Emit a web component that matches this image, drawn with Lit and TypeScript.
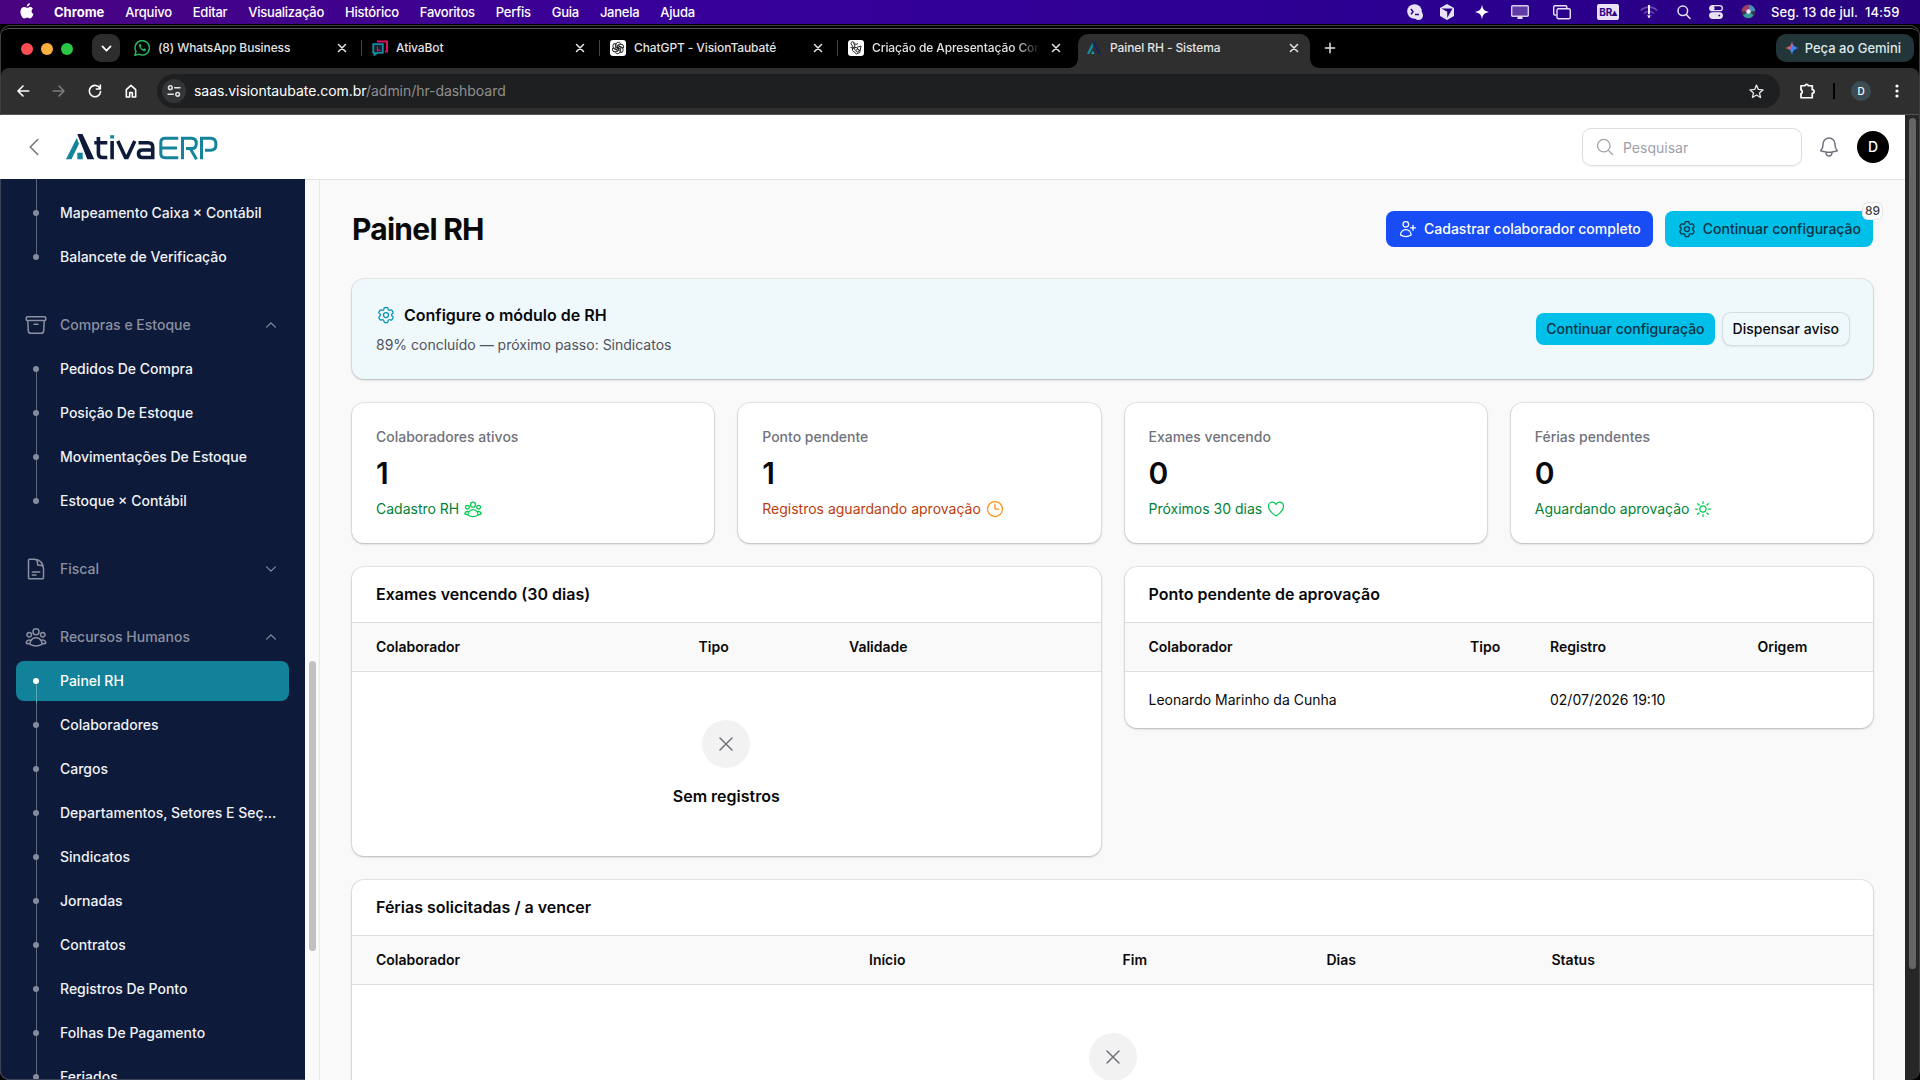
import { LitElement, html, css, svg, nothing } from 'lit';
import { customElement, property } from 'lit/decorators.js';
import { classMap } from 'lit/directives/class-map.js';

const ICONS: Record<string, unknown> = {
  gear: svg`<path d="M9.594 3.94c.09-.542.56-.94 1.11-.94h2.593c.55 0 1.02.398 1.11.94l.213 1.281c.063.374.313.686.645.87.074.04.147.083.22.127.325.196.72.257 1.075.124l1.217-.456a1.125 1.125 0 0 1 1.37.49l1.296 2.247a1.125 1.125 0 0 1-.26 1.431l-1.003.827c-.293.241-.438.613-.43.992a7.723 7.723 0 0 1 0 .255c-.008.378.137.75.43.991l1.004.827c.424.35.534.955.26 1.43l-1.298 2.247a1.125 1.125 0 0 1-1.369.491l-1.217-.456c-.355-.133-.75-.072-1.076.124a6.47 6.47 0 0 1-.22.128c-.331.183-.581.495-.644.869l-.213 1.281c-.09.543-.56.94-1.11.94h-2.594c-.55 0-1.019-.398-1.11-.94l-.213-1.281c-.062-.374-.312-.686-.644-.87a6.52 6.52 0 0 1-.22-.127c-.325-.196-.72-.257-1.076-.124l-1.217.456a1.125 1.125 0 0 1-1.369-.49l-1.297-2.247a1.125 1.125 0 0 1 .26-1.431l1.004-.827c.292-.24.437-.613.43-.991a6.932 6.932 0 0 1 0-.255c.007-.38-.138-.751-.43-.992l-1.004-.827a1.125 1.125 0 0 1-.26-1.43l1.297-2.247a1.125 1.125 0 0 1 1.37-.491l1.216.456c.356.133.751.072 1.076-.124.072-.044.146-.086.22-.128.332-.183.582-.495.644-.869l.214-1.28Z"/><path d="M15 12a3 3 0 1 1-6 0 3 3 0 0 1 6 0Z"/>`,
  userPlus: svg`<path d="M18 7.5v3m0 0v3m0-3h3m-3 0h-3m-2.25-4.125a3.375 3.375 0 1 1-6.75 0 3.375 3.375 0 0 1 6.75 0ZM3 19.235v-.11a6.375 6.375 0 0 1 12.75 0v.109A12.318 12.318 0 0 1 9.374 21c-2.331 0-4.512-.645-6.374-1.766Z"/>`,
  users: svg`<path d="M18 18.72a9.094 9.094 0 0 0 3.741-.479 3 3 0 0 0-4.682-2.72m.94 3.198.001.031c0 .225-.012.447-.037.666A11.944 11.944 0 0 1 12 21c-2.17 0-4.207-.576-5.963-1.584A6.062 6.062 0 0 1 6 18.719m12 0a5.971 5.971 0 0 0-.941-3.197m0 0A5.995 5.995 0 0 0 12 12.75a5.995 5.995 0 0 0-5.058 2.772m0 0a3 3 0 0 0-4.681 2.72 8.986 8.986 0 0 0 3.74.477m.94-3.197a5.971 5.971 0 0 0-.94 3.197M15 6.75a3 3 0 1 1-6 0 3 3 0 0 1 6 0Zm6 3a2.25 2.25 0 1 1-4.5 0 2.25 2.25 0 0 1 4.5 0Zm-13.5 0a2.25 2.25 0 1 1-4.5 0 2.25 2.25 0 0 1 4.5 0Z"/>`,
  clock: svg`<path d="M12 6v6h4.5m4.5 0a9 9 0 1 1-18 0 9 9 0 0 1 18 0Z"/>`,
  heart: svg`<path d="M21 8.25c0-2.485-2.099-4.5-4.688-4.5-1.935 0-3.597 1.126-4.312 2.733-.715-1.607-2.377-2.733-4.313-2.733C5.1 3.75 3 5.765 3 8.25c0 7.22 9 12 9 12s9-4.78 9-12Z"/>`,
  sun: svg`<path d="M12 3v2.25m6.364.386-1.591 1.591M21 12h-2.25m-.386 6.364-1.591-1.591M12 18.75V21m-4.773-4.227-1.591 1.591M5.25 12H3m4.227-4.773L5.636 5.636M15.75 12a3.75 3.75 0 1 1-7.5 0 3.75 3.75 0 0 1 7.5 0Z"/>`,
  archive: svg`<path d="m20.25 7.5-.625 10.632a2.25 2.25 0 0 1-2.247 2.118H6.622a2.25 2.25 0 0 1-2.247-2.118L3.75 7.5M10 11.25h4M3.375 7.5h17.25c.621 0 1.125-.504 1.125-1.125v-1.5c0-.621-.504-1.125-1.125-1.125H3.375c-.621 0-1.125.504-1.125 1.125v1.5c0 .621.504 1.125 1.125 1.125Z"/>`,
  document: svg`<path d="M19.5 14.25v-2.625a3.375 3.375 0 0 0-3.375-3.375h-1.5A1.125 1.125 0 0 1 13.5 7.125v-1.5a3.375 3.375 0 0 0-3.375-3.375H8.25m0 12.75h7.5m-7.5 3H12M10.5 2.25H5.625c-.621 0-1.125.504-1.125 1.125v17.25c0 .621.504 1.125 1.125 1.125h12.75c.621 0 1.125-.504 1.125-1.125V11.25a9 9 0 0 0-9-9Z"/>`,
  up: svg`<path d="m4.5 15.75 7.5-7.5 7.5 7.5"/>`,
  down: svg`<path d="m19.5 8.25-7.5 7.5-7.5-7.5"/>`,
  left: svg`<path d="M15.75 19.5 8.25 12l7.5-7.5"/>`,
  search: svg`<path d="m21 21-5.197-5.197m0 0A7.5 7.5 0 1 0 5.196 5.196a7.5 7.5 0 0 0 10.607 10.607Z"/>`,
  bell: svg`<path d="M14.857 17.082a23.848 23.848 0 0 0 5.454-1.31A8.967 8.967 0 0 1 18 9.75V9A6 6 0 0 0 6 9v.75a8.967 8.967 0 0 1-2.312 6.022c1.733.64 3.56 1.085 5.455 1.31m5.714 0a24.255 24.255 0 0 1-5.714 0m5.714 0a3 3 0 1 1-5.714 0"/>`,
  close: svg`<path d="M6 18 18 6M6 6l12 12"/>`,
  back: svg`<path d="M20.5 12H4.5M12 4.5 4.5 12l7.5 7.5"/>`,
  forward: svg`<path d="M3.5 12h16M12 4.5l7.500 7.500-7.500 7.500"/>`,
  reload: svg`<path d="M19.5 8.2A8.5 8.5 0 1 0 20.4 13M20 3v6h-6"/>`,
  home: svg`<path d="M5 10v11h5v-6.5h4V21h5V10l-7-6.5Z"/>`,
  tune: svg`<path d="M13 7h8M3 17h8"/><circle cx="6.500" cy="7" r="2.800"/><circle cx="17.500" cy="17" r="2.800"/>`,
  star: svg`<path d="m12 3 2.6 6.1 6.6.6-5 4.3 1.5 6.5-5.7-3.5-5.7 3.5 1.5-6.5-5-4.3 6.6-.6Z"/>`,
  puzzle: svg`<path d="M4 5h5.2a2.4 2.4 0 0 1 4.6 0H19v5.300a2.4 2.4 0 0 1 0 4.800V21H4v-5.500a2.700 2.700 0 0 0 0-5Z"/>`,
  plus: svg`<path d="M12 4v16M4 12h16"/>`,
};

const icon = (name: string, size = 20, stroke = 1.5) => html`
  <svg class="icon" viewBox="0 0 24 24" width=${size} height=${size} fill="none" stroke="currentColor"
    stroke-width=${stroke} stroke-linecap="round" stroke-linejoin="round">${ICONS[name]}</svg>`;

const base = css`
  * { box-sizing: border-box; }
  svg { display: block; flex: none; }
`;

@customElement('mac-menubar')
export class MacMenubar extends LitElement {
  static styles = [base, css`
    :host {
      box-sizing: border-box;
      display: flex;
      justify-content: space-between;
      height: 24px;
      padding: 0 19px 1px 20px;
      background: linear-gradient(90deg, #490380, #37009a 35%, #2b0091 75%, #28007c);
      color: #fff;
      font: 500 13px/22px Inter, sans-serif;
    }
    .menus, .status { display: flex; align-items: center; }
    .apple { margin-right: 20px; }
    .menu { margin-right: 21px; white-space: nowrap; letter-spacing: -.25px; }
    .app { font-weight: 700; letter-spacing: 0; }
    .clock { width: 130px; white-space: pre; letter-spacing: .08px; }
    .br {
      width: 22px;
      height: 16px;
      border-radius: 2px;
      background: #e9e2f5;
      color: #2b0088;
      font: 700 10px/16px Inter, sans-serif;
      letter-spacing: -.3px;
      text-align: center;
    }
    .s1 { margin-right: 17px; }
    .s2 { margin-right: 21px; }
    .s3 { margin-right: 22px; }
    .s4 { margin-right: 24px; }
    .s5 { margin-right: 26px; }
    .s6 { margin-right: 21px; }
    .s7 { margin-right: 19px; }
    .s8 { margin-right: 18px; }
    .s9 { margin-right: 18px; }
    .s10 { margin-right: 15px; }
  `];

  menus = ['Arquivo', 'Editar', 'Visualização', 'Histórico', 'Favoritos', 'Perfis', 'Guia', 'Janela', 'Ajuda'];

  render() {
    return html`
      <div class="menus">
        <svg class="apple" width="14" height="17" viewBox="0 0 14 17" fill="#fff">
          <path d="M9.900 0c.1 1.900-1.400 3.500-3.100 3.500C6.600 1.800 8.200.2 9.900 0Z"/>
          <path d="M12.900 5.700c-1.900 1.200-1.700 4.200.6 5.200-.6 1.800-2 4.500-3.500 4.600-1.100 0-1.500-.7-2.800-.7s-1.700.7-2.800.7C2.500 15.400.4 12 .4 8.700c0-3 1.900-4.700 3.900-4.700 1.200 0 2 .8 3 .8s1.700-.8 3.200-.8c.9 0 1.800.5 2.400 1.700Z"/>
        </svg>
        <span class="menu app">Chrome</span>
        ${this.menus.map(m => html`<span class="menu">${m}</span>`)}
      </div>
      <div class="status">
        <svg class="s1" width="16" height="16" viewBox="0 0 16 16"><circle cx="7.500" cy="7.500" r="7.300" fill="#e9e2f5"/><circle cx="11.500" cy="11.500" r="4.500" fill="#e9e2f5"/><path d="m4 5 2 2.700-2 2.700M8 10.400h4" fill="none" stroke="#2b0088" stroke-width="1.500"/></svg>
        <svg class="s2" width="14" height="16" viewBox="0 0 14 16"><path d="m7 0 7 4v8l-7 4-7-4V4Z" fill="#e9e2f5"/><path d="M1.500 4.600h11L7.200 14V7.700Z" fill="#2b0088"/></svg>
        <svg class="s3" width="14" height="16" viewBox="0 0 14 16"><path d="M7 .5c.8 5 2.200 6.500 7 7.500-4.800 1-6.200 2.500-7 7.500-.8-5-2.200-6.500-7-7.500 4.800-1 6.200-2.500 7-7.500Z" fill="#fff"/></svg>
        <svg class="s4" width="18" height="16" viewBox="0 0 18 16"><rect x=".7" y="1.700" width="16.600" height="10.600" rx="1" fill="#5f3ba6" stroke="#d9cdee" stroke-width="1.400"/><path d="M7 12.500h4l.8 2.500H6.200Z" fill="#e9e2f5"/></svg>
        <svg class="s5" width="18" height="16" viewBox="0 0 18 16" fill="none" stroke="#e9e2f5" stroke-width="1.400"><path d="M3.500 11H2a1.300 1.300 0 0 1-1.300-1.300V3A1.300 1.300 0 0 1 2 1.700h10.500A1.300 1.300 0 0 1 13.800 3v1"/><rect x="4" y="4.800" width="13.300" height="10" rx="1.500"/></svg>
        <span class="br s6">BR▴</span>
        <svg class="s7" width="18" height="16" viewBox="0 0 18 16" fill="none" stroke="#6c49ae" stroke-width="1.700"><path d="M1 6.500C5 2 13 2 17 6.500M4 9.500c3-3 7-3 10 0M6.800 12c1.500-1.200 3-1.200 4.400 0"/><path d="M9 1v9M9 11.500v2.300" stroke="#fff" stroke-width="1.800"/></svg>
        <svg class="s8" width="14" height="16" viewBox="0 0 14 16" fill="none" stroke="#e9e2f5" stroke-width="1.500" stroke-linecap="round"><circle cx="5.800" cy="6.800" r="4.800"/><path d="m9.300 10.500 3.700 4"/></svg>
        <svg class="s9" width="14" height="16" viewBox="0 0 14 16" fill="none" stroke="#e9e2f5" stroke-width="1.300"><rect x=".7" y="1.700" width="12.600" height="5" rx="2.500"/><rect x=".7" y="8.800" width="12.600" height="5.500" rx="2.700" fill="#e9e2f5"/><circle cx="3.300" cy="4.200" r="1.700" fill="#e9e2f5"/><circle cx="10.300" cy="11.500" r="1.600" fill="#2b0088"/></svg>
        <svg class="s10" width="15" height="15" viewBox="0 0 15 15"><circle cx="7.500" cy="7.500" r="7" fill="#3b3454"/><path d="M7.500.7a6.800 6.800 0 0 1 6.700 6L8 8Z" fill="#4a8fc0"/><path d="M.8 7a7 7 0 0 1 6.700-6.300L8 8Z" fill="#a83c67"/><path d="M2 11.500a6.500 6.500 0 0 0 10.500 0L8 7Z" fill="#3a9b9e"/><circle cx="7.500" cy="7.500" r="2.200" fill="#f0e8fa"/></svg>
        <span class="clock">Seg. 13 de jul.  14:59</span>
      </div>`;
  }
}

@customElement('browser-chrome')
export class BrowserChrome extends LitElement {
  static styles = [base, css`
    :host {
      box-sizing: border-box;
      display: block;
      height: 91px;
      padding-top: 1px;
      background: #000;
      color: #e3e3e3;
      font: 500 12px/16px Inter, sans-serif;
    }
    .frame {
      height: 90px;
      border: 1px solid #3d3d3d;
      border-bottom: 0;
      border-radius: 10px 10px 0 0;
      padding-top: 2px;
    }
    .strip {
      display: flex;
      align-items: flex-end;
      height: 40px;
      border-top: 1px solid #555;
      border-radius: 9px 9px 0 0;
      margin: 0 -1px;
      padding-left: 21px;
    }
    .lights {
      display: flex;
      gap: 8px;
      align-self: center;
      margin-right: 19px;
    }
    .light { width: 12px; height: 12px; border-radius: 50%; background: #ff4d55; }
    .light.min { background: #ffb03f; }
    .light.max { background: #2ac845; }
    .tab-menu {
      display: grid;
      place-items: center;
      width: 28px;
      height: 28px;
      margin-bottom: 6px;
      border-radius: 9px;
      background: #2d2d2d;
      color: #fff;
    }
    .tab {
      position: relative;
      display: flex;
      align-items: center;
      width: 238px;
      height: 34px;
      padding: 0 9px 6px 14px;
      flex: none;
    }
    .tab.line::after {
      content: '';
      position: absolute;
      right: -4px;
      top: 6px;
      width: 1px;
      height: 16px;
      background: #444;
    }
    .tab.active {
      background: #2f2f2f;
      border-radius: 10px 10px 0 0;
      width: 232px;
      margin-left: 6px;
      padding-left: 8px;
    }
    .tab.active::before, .tab.active::after {
      content: '';
      position: absolute;
      bottom: 0;
      width: 9px;
      height: 9px;
    }
    .tab.active::before {
      left: -9px;
      background: radial-gradient(circle at 0 0, transparent 8.5px, #2f2f2f 9px);
    }
    .tab.active::after {
      right: -9px;
      background: radial-gradient(circle at 100% 0, transparent 8.5px, #2f2f2f 9px);
    }
    .title {
      flex: 1;
      margin: 0 9px 0 8px;
      overflow: hidden;
      white-space: nowrap;
      letter-spacing: -.1px;
    }
    .fade { mask-image: linear-gradient(90deg, #000 86%, transparent); }
    .new { margin: 0 0 13px 13px; }
    .gemini {
      display: flex;
      align-items: center;
      gap: 6px;
      height: 28px;
      padding: 0 13px 0 9px;
      margin: 0 6px 6px auto;
      border-radius: 10px;
      background: #22363a;
      color: #dfe8e9;
      font-size: 13px;
    }
    .toolbar {
      display: flex;
      align-items: center;
      height: 47px;
      padding: 0 20px 0 14px;
      background: #2f2f2f;
      border-bottom: 1px solid #555;
      border-radius: 8px 8px 0 0;
    }
    .nav { display: flex; gap: 20px; color: #fff; margin-right: 18px; }
    .dim { color: #7d7d7d; }
    .omnibox {
      display: flex;
      align-items: center;
      flex: 1;
      height: 34px;
      padding: 0 15px 0 5px;
      border-radius: 17px;
      background: #1e1f21;
      font-size: 14px;
      font-weight: 400;
      letter-spacing: -.05px;
    }
    .site {
      display: grid;
      place-items: center;
      width: 24px;
      height: 24px;
      border-radius: 50%;
      background: #343537;
      margin-right: 8px;
    }
    .url { flex: 1; color: #8e8f90; }
    .host { color: #fff; }
    .tools { display: flex; align-items: center; color: #fff; }
    .puzzle { margin: 0 17px 0 18px; }
    .sep { width: 2px; height: 16px; background: #000; margin-right: 16px; }
    .me {
      width: 20px;
      height: 20px;
      border-radius: 50%;
      background: #3b4c55;
      text-align: center;
      font: 500 10px/20px Inter, sans-serif;
      margin-right: 24px;
    }
  `];

  tabs = [
    { title: '(8) WhatsApp Business', logo: 'wa', cls: 'line' },
    { title: 'AtivaBot', logo: 'bot', cls: 'line' },
    { title: 'ChatGPT - VisionTaubaté', logo: 'gpt', cls: 'line' },
    { title: 'Criação de Apresentação Comercial', logo: 'knot', cls: 'cut' },
    { title: 'Painel RH - Sistema', logo: 'ativa', cls: 'active' },
  ];

  logo(name: string) {
    switch (name) {
      case 'wa':
        return svg`<path d="M.9 15.200 2 11.500A7.200 7.200 0 1 1 4.800 14.200Z" fill="none" stroke="#25b363" stroke-width="1.500"/><path d="M5.300 4.200c-1.700 2 2.700 7.600 6 7l.9-1.700-2-1.200-1 .9C8 8.800 7 7.800 6.700 6.800l.8-.9L6.500 4Z" fill="#25b363"/>`;
      case 'bot':
        return svg`<path d="M5 1.500h10v10h-2" fill="none" stroke="#d8105f" stroke-width="2"/><path d="M1.200 4.200h9.600v8.600H5L2.500 15v-2.200H1.200Z" fill="#102530" stroke="#178ba0" stroke-width="1.800"/><path d="M5.500 6.500v3.800h3" fill="none" stroke="#d8105f" stroke-width="1.300"/>`;
      case 'gpt':
        return svg`<rect width="16" height="16" rx="3" fill="#fff"/><g fill="none" stroke="#222" stroke-width=".9">${[0, 60, 120, 180, 240, 300].map(a =>
          svg`<path transform="rotate(${a} 8 8)" d="M6.100 8V4.400a2.400 2.400 0 0 1 4.500-1L7.500 5.300v3.400"/>`)}</g>`;
      case 'knot':
        return svg`<rect width="16" height="16" rx="3" fill="#fff"/><g fill="none" stroke="#222" stroke-width="1"><path d="M3 3.500a1.500 1.500 0 0 1 2.500-1.300L8 4.500l2-1M3 3.500 5 7M5.500 2.500 7 6M2.500 7.500 6 8M8.500 7.500 13 6l-1.200 6.500L8.500 14 4.500 10.500V8Z"/><path d="M7 6c-1 1.500-1 3 .5 4.500M9 8l3 3"/><circle cx="9.500" cy="10.500" r="1.500"/></g>`;
      default:
        return svg`<path d="M6.500 2.500 .8 14h2.500L7 7Z" fill="#1a8aa0"/><path d="M7 1.500h2L15 14h-3Z" fill="#16245a"/><path d="m6.800 10.500 1.700 3.500h-3.300Z" fill="#1fa3b8"/>`;
    }
  }

  render() {
    return html`
      <div class="frame">
        <div class="strip">
          <div class="lights"><i class="light"></i><i class="light min"></i><i class="light max"></i></div>
          <div class="tab-menu">${icon('down', 13, 3.2)}</div>
          ${this.tabs.map(t => html`
            <div class="tab ${t.cls}">
              <svg width="16" height="16" viewBox="0 0 16 16">${this.logo(t.logo)}</svg>
              <span class=${classMap({ title: true, fade: t.cls === 'cut' })}>${t.title}</span>
              ${icon('close', 14, 2.7)}
            </div>`)}
          <div class="new">${icon('plus', 14, 2.6)}</div>
          <div class="gemini">
            <svg width="14" height="14" viewBox="0 0 14 14">
              <defs><linearGradient id="g" x1="0" y1=".2" x2="1" y2=".7"><stop offset=".15" stop-color="#f1b82d"/><stop offset=".35" stop-color="#e8505b"/><stop offset=".55" stop-color="#3b86f7"/><stop offset="1" stop-color="#4285f4"/></linearGradient></defs>
              <path d="M7 0c.8 4.500 2.500 6.200 7 7-4.500.8-6.200 2.500-7 7-.8-4.500-2.500-6.200-7-7 4.500-.8 6.200-2.500 7-7Z" fill="url(#g)"/>
            </svg>
            Peça ao Gemini
          </div>
        </div>
        <div class="toolbar">
          <div class="nav">
            ${icon('back', 16, 2.4)}
            <span class="dim">${icon('forward', 16, 2.4)}</span>
            ${icon('reload', 16, 2.4)}
            ${icon('home', 16, 2.4)}
          </div>
          <div class="omnibox">
            <span class="site">${icon('tune', 16, 2.2)}</span>
            <span class="url"><span class="host">saas.visiontaubate.com.br</span>/admin/hr-dashboard</span>
            ${icon('star', 17, 1.9)}
          </div>
          <div class="tools">
            <span class="puzzle">${icon('puzzle', 18, 2.3)}</span>
            <span class="sep"></span>
            <span class="me">D</span>
            <svg width="4" height="14" viewBox="0 0 4 14" fill="#fff"><circle cx="2" cy="2" r="1.600"/><circle cx="2" cy="7" r="1.600"/><circle cx="2" cy="12" r="1.600"/></svg>
          </div>
        </div>
      </div>`;
  }
}

@customElement('app-topbar')
export class AppTopbar extends LitElement {
  static styles = [base, css`
    :host {
      box-sizing: border-box;
      display: flex;
      align-items: center;
      height: 64px;
      padding: 0 16px 0 22px;
      background: #fff;
      color: #71717a;
    }
    .logo { margin: 0 auto 0 20px; }
    .search {
      display: flex;
      align-items: center;
      gap: 8px;
      width: 220px;
      height: 38px;
      padding: 0 12px;
      border: 1px solid #dedee0;
      border-radius: 9px;
      box-shadow: 0 1px 2px rgba(0, 0, 0, .06);
      color: #9f9fa9;
      font: 400 14px Inter, sans-serif;
    }
    .bell { margin: 0 16px 0 15px; }
    .avatar {
      width: 32px;
      height: 32px;
      border-radius: 50%;
      background: #000;
      color: #fff;
      font: 500 14px/32px Inter, sans-serif;
      text-align: center;
    }
  `];

  render() {
    return html`
      ${icon('left', 24, 1.5)}
      <svg class="logo" width="152" height="26" viewBox="0 0 152 26" fill="none">
        <path d="M10.700 4 0 25.300h5.500l7.500-15.500Z" fill="#14849c"/>
        <path d="M11.300 0h5.200l11.800 25.300h-7Z" fill="#0e1a3a"/>
        <path d="M11.300 18.700h5.400v6.600h-5.400Z" fill="#14849c"/>
        <g stroke="#0e1a3a" stroke-width="3.600">
          <path d="M32.400 3v16.200q0 4.300 4.300 4.300h4.600M28.300 8.800h13M46.100 7v18.300"/>
          <path d="M51.800 7l7.700 16.500h1.600L68.800 7"/>
          <path d="M72.500 8.800h9.800q4.400 0 4.400 4.400v12.100M86.700 16H76.500q-4 0-4 3.750t4 3.750h10.200"/>
        </g>
        <path d="M44.200 1.200h3.900v3.300h-3.900Z" fill="#14849c"/>
        <g stroke="#14849c" stroke-width="3">
          <path d="M112.300 4.200H99q-4.200 0-4.200 4.200v11.200q0 4.200 4.200 4.200h13.300M95 13.900h16"/>
          <path d="M116.500 25.300V4.200h9q4.800 0 4.800 5.200t-4.800 5.200h-5.500M124.500 15l6 10.300"/>
          <path d="M135.500 25.300V4.200h9q5.500 0 5.500 6t-5.500 6H139"/>
        </g>
      </svg>
      <div class="search">${icon('search', 20)}Pesquisar</div>
      <div class="bell">${icon('bell', 24)}</div>
      <div class="avatar">D</div>`;
  }
}

interface Group { label?: string; icon?: string; open?: boolean; items: string[]; cut?: boolean }

@customElement('app-sidebar')
export class AppSidebar extends LitElement {
  @property() active = 'Painel RH';

  static styles = [base, css`
    :host { display: flex; width: 320px; flex: none; overflow: hidden; }
    .nav {
      width: 305px;
      padding: 14px 16px 0 15px;
      background: #0e1a3a;
      border-left: 1px solid #3c4357;
      border-bottom: 1px solid #3c4357;
      border-bottom-left-radius: 9px;
      overflow: hidden;
      font: 500 14px/24px Inter, sans-serif;
      color: #f1f2f5;
    }
    .group { display: flex; flex-direction: column; gap: 4px; margin-bottom: 28px; }
    .row {
      display: flex;
      align-items: center;
      gap: 12px;
      height: 40px;
      padding: 0 8px;
      border-radius: 8px;
    }
    .head { color: #8b90a0; }
    .label {
      flex: 1;
      overflow: hidden;
      text-overflow: ellipsis;
      white-space: nowrap;
    }
    .chev { margin-right: 3px; }
    .mark {
      position: relative;
      display: grid;
      place-items: center;
      width: 24px;
      height: 44px;
      flex: none;
    }
    .mark::before {
      content: '';
      position: absolute;
      left: 12px;
      top: 0;
      width: 1px;
      height: 44px;
      background: #5f6577;
    }
    .first .mark::before { top: 22px; height: 22px; }
    .last .mark::before { height: 22px; }
    .above .mark::before { top: -14px; height: 58px; }
    .mark::after {
      content: '';
      width: 6px;
      height: 6px;
      border-radius: 50%;
      background: #868c9c;
      z-index: 1;
    }
    .active { background: #12819a; color: #fff; }
    .active .mark::before { background: #5ba8b8; }
    .active .mark::after { background: #fff; }
    .track {
      width: 15px;
      background: #fafafa;
      border-top: 1px solid #e4e4e5;
      border-right: 1px solid #e8e8e8;
      padding: 481px 3px 0 4px;
    }
    .thumb { height: 290px; border-radius: 4px; background: #c1c1c1; }
  `];

  groups: Group[] = [
    { cut: true, items: ['Mapeamento Caixa × Contábil', 'Balancete de Verificação'] },
    { label: 'Compras e Estoque', icon: 'archive', open: true, items: ['Pedidos De Compra', 'Posição De Estoque', 'Movimentações De Estoque', 'Estoque × Contábil'] },
    { label: 'Fiscal', icon: 'document', items: [] },
    {
      label: 'Recursos Humanos', icon: 'users', open: true, items: ['Painel RH', 'Colaboradores', 'Cargos', 'Departamentos, Setores E Seções',
        'Sindicatos', 'Jornadas', 'Contratos', 'Registros De Ponto', 'Folhas De Pagamento', 'Feriados', 'Férias'],
    },
  ];

  render() {
    return html`
      <nav class="nav">
        ${this.groups.map(g => html`
          <div class="group">
            ${g.label ? html`
              <div class="row head">
                ${icon(g.icon!, 24)}
                <span class="label">${g.label}</span>
                <span class="chev">${icon(g.open ? 'up' : 'down', 14, 2)}</span>
              </div>` : nothing}
            ${g.items.map((item, i) => html`
              <div class=${classMap({
                row: true,
                first: i === 0 && !g.cut,
                above: i === 0 && !!g.cut,
                last: i === g.items.length - 1,
                active: item === this.active,
              })}>
                <span class="mark"></span>
                <span class="label">${item}</span>
              </div>`)}
          </div>`)}
      </nav>
      <div class="track"><div class="thumb"></div></div>`;
  }
}

interface Column { label: string; width: number }

@customElement('data-table')
export class DataTable extends LitElement {
  @property() heading = '';
  @property({ attribute: false }) columns: Column[] = [];
  @property({ attribute: false }) rows: string[][] = [];

  static styles = [base, css`
    :host {
      display: block;
      overflow: hidden;
      border-radius: 12px;
      background: #fff;
      box-shadow: 0 0 0 1px rgba(9, 9, 11, .07), 0 1px 3px rgba(0, 0, 0, .12), 0 1px 2px rgba(0, 0, 0, .1);
      font: 400 14px/20px Inter, sans-serif;
      color: #09090b;
    }
    .heading {
      height: 56px;
      padding: 15px 24px 0;
      border-bottom: 1px solid #dedee0;
      font-weight: 600;
      font-size: 16px;
      line-height: 24px;
    }
    .head, .line { display: flex; align-items: center; padding-left: 24px; }
    .head {
      height: 49px;
      background: #f9f9f9;
      border-bottom: 1px solid #dedee0;
      font-weight: 600;
    }
    .line { height: 56px; }
    .cell { flex: none; white-space: nowrap; }
    .empty {
      display: flex;
      flex-direction: column;
      align-items: center;
      gap: 16px;
      padding: 48px 0;
      font: 600 16px/24px Inter, sans-serif;
    }
    .circle {
      display: grid;
      place-items: center;
      width: 48px;
      height: 48px;
      border-radius: 50%;
      background: #f2f2f2;
      color: #71717b;
    }
  `];

  render() {
    return html`
      <div class="heading">${this.heading}</div>
      <div class="head">${this.columns.map(c => html`<span class="cell" style="width:${c.width}px">${c.label}</span>`)}</div>
      ${this.rows.length
        ? this.rows.map(r => html`
            <div class="line">${this.columns.map((c, i) => html`<span class="cell" style="width:${c.width}px">${r[i]}</span>`)}</div>`)
        : html`<div class="empty"><div class="circle">${icon('close', 24)}</div>Sem registros</div>`}`;
  }
}

@customElement('app-root')
export class AppRoot extends LitElement {
  static styles = [base, css`
    :host {
      display: flex;
      flex-direction: column;
      width: 1920px;
      height: 1080px;
      overflow: hidden;
      background: #000;
      font-family: Inter, sans-serif;
      color: #09090b;
    }
    .window { display: flex; flex: 1; min-height: 0; }
    .page { display: flex; flex-direction: column; width: 1905px; background: #f9f9f9; border-bottom-left-radius: 10px; }
    .body { display: flex; flex: 1; min-height: 0; }
    .scroll { width: 15px; background: #272727; padding: 3px 3px 0 4px; border-right: 1px solid #444; border-bottom-right-radius: 10px; }
    .thumb { height: 851px; border-radius: 4px; background: #656565; }
    .main { flex: 1; padding: 31px 32px 0; overflow: hidden; border-top: 1px solid #e4e4e5; }
    .header { display: flex; align-items: center; height: 36px; margin-bottom: 32px; }
    .title { flex: 1; margin: 0; font: 700 30px/36px Inter, sans-serif; letter-spacing: -.75px; }
    .btn {
      position: relative;
      display: flex;
      align-items: center;
      gap: 6px;
      height: 36px;
      padding: 0 12px;
      border-radius: 8px;
      font: 500 14px/20px Inter, sans-serif;
      white-space: nowrap;
    }
    .blue { background: #184cf4; color: #fff; margin-right: 12px; }
    .cyan { background: #00bfe8; color: #083344; }
    .badge {
      position: absolute;
      top: -8px;
      right: -9px;
      height: 16px;
      padding: 0 2px;
      border-radius: 5px;
      background: #fafafa;
      box-shadow: 0 0 0 1px #e6e6e7;
      color: #3f3f46;
      font: 500 12px/16px Inter, sans-serif;
    }
    .card {
      border-radius: 12px;
      background: #fff;
      box-shadow: 0 0 0 1px rgba(9, 9, 11, .07), 0 1px 3px rgba(0, 0, 0, .12), 0 1px 2px rgba(0, 0, 0, .1);
    }
    .notice { display: flex; align-items: center; height: 100px; padding: 0 24px; margin-bottom: 24px; background: #eff8fb; }
    .notice-text { flex: 1; }
    .notice-title { display: flex; align-items: center; gap: 8px; font: 600 16px/24px Inter, sans-serif; margin-bottom: 8px; }
    .tint { color: #0092b8; }
    .notice-sub { font: 400 14px/20px Inter, sans-serif; color: #52525c; }
    .sm { height: 32px; padding: 0 10px; }
    .plain { margin-left: 8px; color: #09090b; box-shadow: 0 0 0 1px #d5dcdf, 0 1px 3px rgba(0, 0, 0, .14); }
    .stats { display: grid; grid-template-columns: repeat(4, 1fr); gap: 24px; margin-bottom: 24px; }
    .stat { display: flex; flex-direction: column; gap: 8px; padding: 24px; height: 140px; font: 400 14px/20px Inter, sans-serif; }
    .stat-label { font-weight: 500; color: #71717b; }
    .stat-value { font: 600 30px/36px Inter, sans-serif; letter-spacing: -.75px; }
    .stat-desc { display: flex; align-items: center; gap: 4px; color: #008236; }
    .mark { color: #00c950; }
    .warn { color: #bb3d0c; }
    .warn .mark { color: #fb9418; }
    .tables { display: grid; grid-template-columns: 1fr 1fr; align-items: start; gap: 24px; }
    .wide { grid-column: span 2; }
  `];

  stats = [
    { label: 'Colaboradores ativos', value: 1, desc: 'Cadastro RH', icon: 'users' },
    { label: 'Ponto pendente', value: 1, desc: 'Registros aguardando aprovação', icon: 'clock', warn: true },
    { label: 'Exames vencendo', value: 0, desc: 'Próximos 30 dias', icon: 'heart' },
    { label: 'Férias pendentes', value: 0, desc: 'Aguardando aprovação', icon: 'sun' },
  ];

  exams: Column[] = [{ label: 'Colaborador', width: 322.5 }, { label: 'Tipo', width: 150.5 }, { label: 'Validade', width: 200 }];
  punches: Column[] = [
    { label: 'Colaborador', width: 321.5 }, { label: 'Tipo', width: 80 }, { label: 'Registro', width: 207.5 }, { label: 'Origem', width: 90 },
  ];
  vacations: Column[] = [
    { label: 'Colaborador', width: 493 }, { label: 'Início', width: 253.5 }, { label: 'Fim', width: 204 }, { label: 'Dias', width: 225 }, { label: 'Status', width: 200 },
  ];

  render() {
    return html`
      <mac-menubar></mac-menubar>
      <browser-chrome></browser-chrome>
      <div class="window">
        <div class="page">
          <app-topbar></app-topbar>
          <div class="body">
            <app-sidebar></app-sidebar>
            <main class="main">
              <div class="header">
                <h1 class="title">Painel RH</h1>
                <div class="btn blue">${icon('userPlus')}Cadastrar colaborador completo</div>
                <div class="btn cyan">${icon('gear')}Continuar configuração<span class="badge">89</span></div>
              </div>
              <section class="card notice">
                <div class="notice-text">
                  <div class="notice-title"><span class="tint">${icon('gear')}</span>Configure o módulo de RH</div>
                  <div class="notice-sub">89% concluído — próximo passo: Sindicatos</div>
                </div>
                <div class="btn cyan sm">Continuar configuração</div>
                <div class="btn plain sm">Dispensar aviso</div>
              </section>
              <section class="stats">
                ${this.stats.map(s => html`
                  <div class="card stat">
                    <span class="stat-label">${s.label}</span>
                    <span class="stat-value">${s.value}</span>
                    <span class=${classMap({ 'stat-desc': true, warn: !!s.warn })}>${s.desc}<span class="mark">${icon(s.icon)}</span></span>
                  </div>`)}
              </section>
              <section class="tables">
                <data-table heading="Exames vencendo (30 dias)" .columns=${this.exams}></data-table>
                <data-table heading="Ponto pendente de aprovação" .columns=${this.punches}
                  .rows=${[['Leonardo Marinho da Cunha', '', '02/07/2026 19:10', '']]}></data-table>
                <data-table class="wide" heading="Férias solicitadas / a vencer" .columns=${this.vacations}></data-table>
              </section>
            </main>
          </div>
        </div>
        <div class="scroll"><div class="thumb"></div></div>
      </div>`;
  }
}
